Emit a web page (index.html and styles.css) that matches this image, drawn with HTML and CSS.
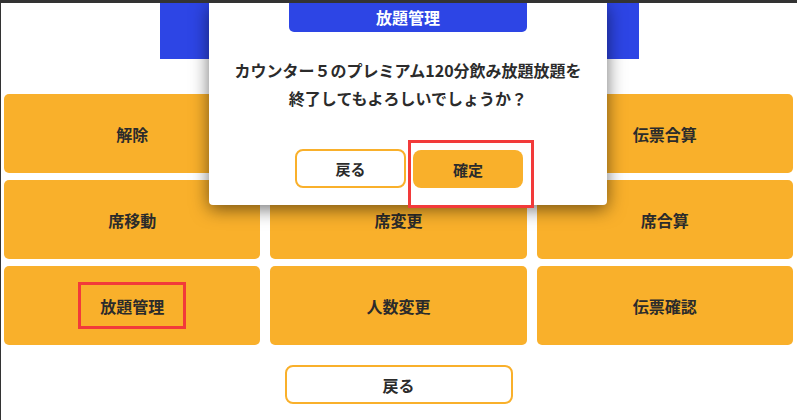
FILE: index.html
```
<!DOCTYPE html>
<html lang="ja">
<head>
  <meta charset="UTF-8">
  <meta name="viewport" content="width=device-width, initial-scale=1.0">
  <title>放題管理</title>
  <link rel="stylesheet" href="styles.css">
</head>
<body>
  <div class="screen">
    <div class="page-header"></div>

    <div class="menu-grid">
      <button class="menu-btn">解除</button>
      <button class="menu-btn">伝票分割</button>
      <button class="menu-btn">伝票合算</button>
      <button class="menu-btn">席移動</button>
      <button class="menu-btn">席変更</button>
      <button class="menu-btn">席合算</button>
      <button class="menu-btn"><span class="marked">放題管理</span></button>
      <button class="menu-btn">人数変更</button>
      <button class="menu-btn">伝票確認</button>
    </div>

    <div class="footer">
      <button class="back-btn">戻る</button>
    </div>

    <!-- confirm dialog -->
    <div class="dialog">
      <div class="dialog-title">放題管理</div>
      <p class="dialog-message">カウンター５のプレミアム120分飲み放題放題を<br>終了してもよろしいでしょうか？</p>
      <div class="dialog-actions">
        <button class="btn-outline">戻る</button>
        <span class="marked-ok"><button class="btn-fill">確定</button></span>
      </div>
    </div>
  </div>
</body>
</html>
```

FILE: styles.css
```
/* base */
* {
  box-sizing: border-box;
}

body {
  margin: 0;
  font-family: "Noto Sans CJK JP", "Noto Sans", sans-serif;
  background-color: #fff;
  color: #2b2b2b;
}

button {
  font-family: inherit;
  font-weight: bold;
  font-size: 16px;
  color: #2b2b2b;
  cursor: pointer;
}

.screen {
  position: relative;
  height: 420px;
  border-top: 3px solid #333;
  border-left: 1px solid #333;
  overflow: hidden;
}

.page-header {
  width: 479px;
  height: 56px;
  margin: 0 auto 0 159px;
  background-color: #2d45e5;
}

.menu-grid {
  display: grid;
  grid-template-columns: repeat(3, 1fr);
  grid-auto-rows: 79px;
  gap: 7px 10px;
  padding: 0 4px 0 3px;
  margin-top: 35px;
}

.menu-btn {
  border: none;
  border-radius: 5px;
  background-color: #f9b02b;
  padding: 0;
}

.marked {
  display: inline-block;
  padding: 9px 19px 8px;
  border: 3px solid #f23a3a;
}

.footer {
  display: flex;
  justify-content: center;
  margin-top: 20px;
  padding-right: 1px;
}

.back-btn {
  width: 228px;
  height: 39px;
  background-color: #fff;
  border: 2px solid #f9b02b;
  border-radius: 8px;
}

/* dialog */
.dialog {
  position: absolute;
  left: 208px;
  top: 0;
  width: 398px;
  height: 202px;
  background-color: #fff;
  border-radius: 0 0 4px 4px;
  box-shadow: 0 4px 18px rgba(0, 0, 0, 0.55);
  display: flex;
  flex-direction: column;
  align-items: center;
}

.dialog-title {
  width: 238px;
  height: 29px;
  background-color: #2d45e5;
  color: #fff;
  font-weight: bold;
  font-size: 16px;
  text-align: center;
  line-height: 29px;
  border-radius: 0 0 5px 5px;
}

.dialog-message {
  margin: 24px 0 0;
  font-size: 16px;
  font-weight: bold;
  line-height: 28px;
  text-align: center;
}

.dialog-actions {
  display: flex;
  gap: 2px;
  margin-top: 28px;
  margin-left: 13px;
  align-items: flex-start;
}

.btn-outline,
.btn-fill {
  width: 111px;
  height: 39px;
  border-radius: 8px;
  font-size: 15px;
}

.btn-outline {
  background-color: #fff;
  border: 2px solid #f9b02b;
  margin-top: 9px;
}

.btn-fill {
  background-color: #f9b02b;
  border: none;
  width: 110px;
  height: 38px;
}

.marked-ok {
  display: block;
  border: 3px solid #f23a3a;
  padding: 7px 8px 17px 2px;
}
```
